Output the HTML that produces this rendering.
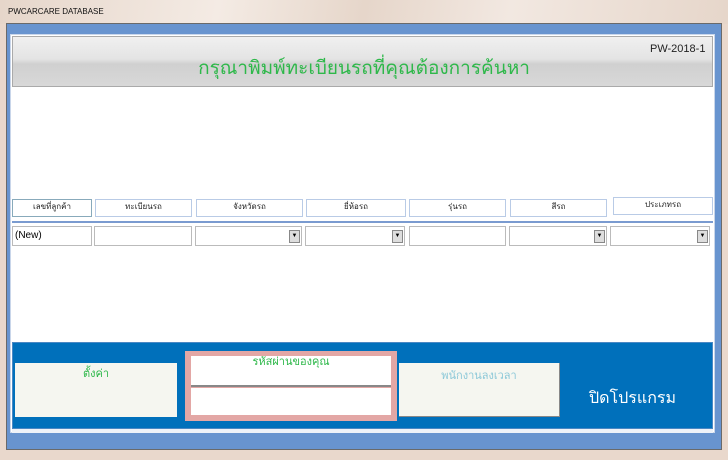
<!DOCTYPE html>
<html><head><meta charset="utf-8"><style>
*{margin:0;padding:0;box-sizing:border-box}
body{width:728px;height:460px;background:#e9d8cc;font-family:"Liberation Sans","Noto Sans CJK SC",sans-serif;position:relative;overflow:hidden}
.a{position:absolute}
.lbl{position:absolute;top:199px;height:18px;background:#fff;border:1px solid #b9cbe6;font-size:8px;text-align:center;line-height:14px;color:#222}
.in{position:absolute;top:226px;height:20px;background:#fff;border:1px solid #bbb}
.dd{position:absolute;right:1px;top:3px;width:11px;height:13px;background:#ddd;border:1px solid #888;font-size:6px;text-align:center;line-height:11px}
</style></head><body>
<div class="a" style="left:0;top:0;width:728px;height:24px;background:linear-gradient(100deg,#e6d6ca,#f4ebe4 30%,#e6d6ca 50%,#f2e8e1 70%,#e6d6ca)"></div>
<div class="a" style="left:8px;top:7px;font-size:8px;color:#111">PWCARCARE DATABASE</div>
<div class="a" style="left:6px;top:23px;width:716px;height:427px;background:#6894cf;border:1px solid #6a6a6a"></div>
<div class="a" style="left:10px;top:34px;width:705px;height:399px;background:#fff;border:1px solid #c9d6ea"></div>
<div class="a" style="left:12px;top:36px;width:701px;height:51px;background:linear-gradient(#f0f0f0,#e4e4e4 45%,#d0d0d0 55%,#d8d8d8);border:1px solid #aaa"></div>
<div class="a" style="left:650px;top:43px;font-size:11px;color:#222">PW-2018-1</div>
<div class="a" style="left:0;width:728px;top:53px;text-align:center;font-size:19px;color:#2eb84a">กรุณาพิมพ์ทะเบียนรถที่คุณต้องการค้นหา</div>
<div class="lbl" style="left:12px;width:80px;border-color:#8ab">เลขที่ลูกค้า</div>
<div class="lbl" style="left:95px;width:97px">ทะเบียนรถ</div>
<div class="lbl" style="left:196px;width:107px">จังหวัดรถ</div>
<div class="lbl" style="left:306px;width:100px">ยี่ห้อรถ</div>
<div class="lbl" style="left:409px;width:97px">รุ่นรถ</div>
<div class="lbl" style="left:510px;width:97px">สีรถ</div>
<div class="lbl" style="left:613px;width:100px;top:197px">ประเภทรถ</div>
<div class="a" style="left:12px;top:221px;width:701px;height:2px;background:#7a9bd0"></div>
<div class="in" style="left:12px;width:80px;font-size:10px;padding:3px 2px">(New)</div>
<div class="in" style="left:94px;width:98px"></div>
<div class="in" style="left:195px;width:107px"><div class="dd">▼</div></div>
<div class="in" style="left:305px;width:100px"><div class="dd">▼</div></div>
<div class="in" style="left:409px;width:97px"></div>
<div class="in" style="left:509px;width:98px"><div class="dd">▼</div></div>
<div class="in" style="left:610px;width:100px"><div class="dd">▼</div></div>
<div class="a" style="left:12px;top:342px;width:701px;height:87px;background:#0070bb;border:1px solid #4a88c4"></div>
<div class="a" style="left:15px;top:363px;width:162px;height:54px;background:#f5f6f0;text-align:center;color:#2eb84a;font-size:11px;padding-top:1px">ตั้งค่า</div>
<div class="a" style="left:185px;top:351px;width:212px;height:70px;background:#e3a7a5"></div>
<div class="a" style="left:191px;top:356px;width:200px;height:29px;background:#fff;text-align:center;color:#2eb84a;font-size:11px;line-height:12px">รหัสผ่านของคุณ</div>
<div class="a" style="left:191px;top:385px;width:200px;height:2px;background:#888"></div>
<div class="a" style="left:191px;top:388px;width:200px;height:27px;background:#fff"></div>
<div class="a" style="left:399px;top:363px;width:161px;height:54px;background:#f5f6f0;border-right:1px solid #888;border-bottom:1px solid #888;text-align:center;color:#8cc8d8;font-size:11px;padding-top:3px">พนักงานลงเวลา</div>
<div class="a" style="left:589px;top:386px;color:#fff;font-size:16px">ปิดโปรแกรม</div>
<div class="a" style="left:12px;top:429px;width:701px;height:4px;background:#eef2f8"></div>
</body></html>
